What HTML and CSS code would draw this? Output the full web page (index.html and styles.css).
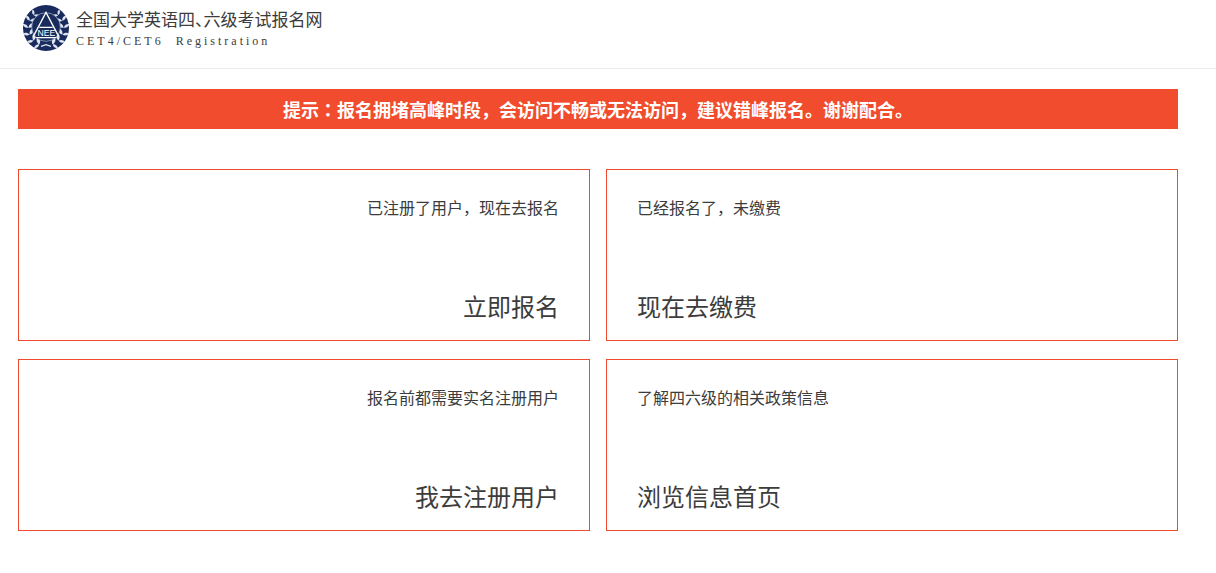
FILE: index.html
```html
<!DOCTYPE html>
<html lang="zh-CN">
<head>
<meta charset="utf-8">
<meta name="viewport" content="width=device-width, initial-scale=1">
<title>全国大学英语四、六级考试报名网</title>
<link rel="stylesheet" href="styles.css">
</head>
<body>
<header class="site-header">
  <svg class="emblem" viewBox="0 0 138 138" aria-hidden="true">
    <defs>
      <g id="leaf">
        <path d="M0-2C3-13 11-17 20-15C18-7 10 0 0-2Z"/>
        <path d="M0-2C-3-11-10-14-17-13C-15-6-9 0 0-2Z"/>
      </g>
      <g id="branch" fill="#dfe5f1">
        <use href="#leaf" transform="rotate(20 69 69) translate(69 122) rotate(-90)"/>
        <use href="#leaf" transform="rotate(43 69 69) translate(69 122) rotate(-90)"/>
        <use href="#leaf" transform="rotate(66 69 69) translate(69 122) rotate(-90)"/>
        <use href="#leaf" transform="rotate(89 69 69) translate(69 122) rotate(-90)"/>
        <use href="#leaf" transform="rotate(112 69 69) translate(69 122) rotate(-90)"/>
        <use href="#leaf" transform="rotate(135 69 69) translate(69 122) rotate(-90) scale(.85)"/>
      </g>
    </defs>
    <circle cx="69" cy="69" r="69" fill="#182b5c"/>
    <use href="#branch"/>
    <use href="#branch" transform="translate(138 0) scale(-1 1)"/>
    <path d="M54 124L69 119L84 124" fill="none" stroke="#dfe5f1" stroke-width="4"/>
    <circle cx="69" cy="66" r="43" fill="#182b5c" stroke="#aebad6" stroke-width="2"/>
    <path d="M31 94L69 22L107 94M49 67H89M38 98H100" fill="none" stroke="#fff" stroke-width="4"/>
    <text class="emblem-text" x="70" y="92" text-anchor="middle">NEE</text>
  </svg>
  <div class="brand">
    <h1 class="brand-title">全国大学英语四<span class="half">、</span>六级考试报名网</h1>
    <p class="brand-sub">CET4/CET6&nbsp; Registration</p>
  </div>
</header>
<main class="content">
  <p class="notice">提示<span class="colon" lang="zh-TW">：</span>报名拥堵高峰时段，会访问不畅或无法访问，建议错峰报名。谢谢配合。</p>
  <nav class="cards">
    <a class="card card-end" href="#apply"><span class="hint">已注册了用户，现在去报名</span><span class="action">立即报名</span></a>
    <a class="card" href="#pay"><span class="hint">已经报名了，未缴费</span><span class="action">现在去缴费</span></a>
    <a class="card card-end" href="#register"><span class="hint">报名前都需要实名注册用户</span><span class="action">我去注册用户</span></a>
    <a class="card" href="#info"><span class="hint">了解四六级的相关政策信息</span><span class="action">浏览信息首页</span></a>
  </nav>
</main>
</body>
</html>
```
FILE: styles.css
```css
* {
  box-sizing: border-box;
}

body {
  margin: 0;
  background: #fff;
  color: #3c3c3c;
  font-family: "Noto Sans CJK SC", sans-serif;
}

.site-header {
  display: flex;
  align-items: flex-start;
  gap: 7px;
  padding: 5px 23px 17px;
  border-bottom: 1px solid #ebebeb;
}

.emblem {
  width: 46px;
  height: 46px;
}

.emblem-text {
  font: 26px "Liberation Sans", sans-serif;
  fill: #fff;
}

.brand-title {
  margin: 0;
  font-size: 17px;
  font-weight: 400;
  line-height: 28px;
}

.half {
  font-feature-settings: "halt";
}

.brand-sub {
  margin: 0;
  font-family: "Liberation Serif", serif;
  font-size: 12px;
  line-height: 16px;
  letter-spacing: 3px;
}

.content {
  padding: 20px 38px 42px 18px;
}

.notice {
  margin: 0 0 40px;
  background: #f14c2e;
  color: #fff;
  font-size: 18px;
  font-weight: 700;
  line-height: 40px;
  text-align: center;
}

.colon {
  font-family: "Noto Sans CJK TC", sans-serif;
  line-height: 1;
}

.cards {
  display: grid;
  grid-template-columns: 1fr 1fr;
  gap: 18px 16px;
}

.card {
  display: flex;
  flex-direction: column;
  justify-content: space-between;
  min-height: 172px;
  padding: 25px 30px 16px;
  border: 1px solid #ee4b2d;
  color: inherit;
  text-decoration: none;
}

.card-end {
  text-align: right;
}

.hint {
  font-size: 16px;
  line-height: 24px;
}

.action {
  font-size: 24px;
  line-height: 36px;
}
```
